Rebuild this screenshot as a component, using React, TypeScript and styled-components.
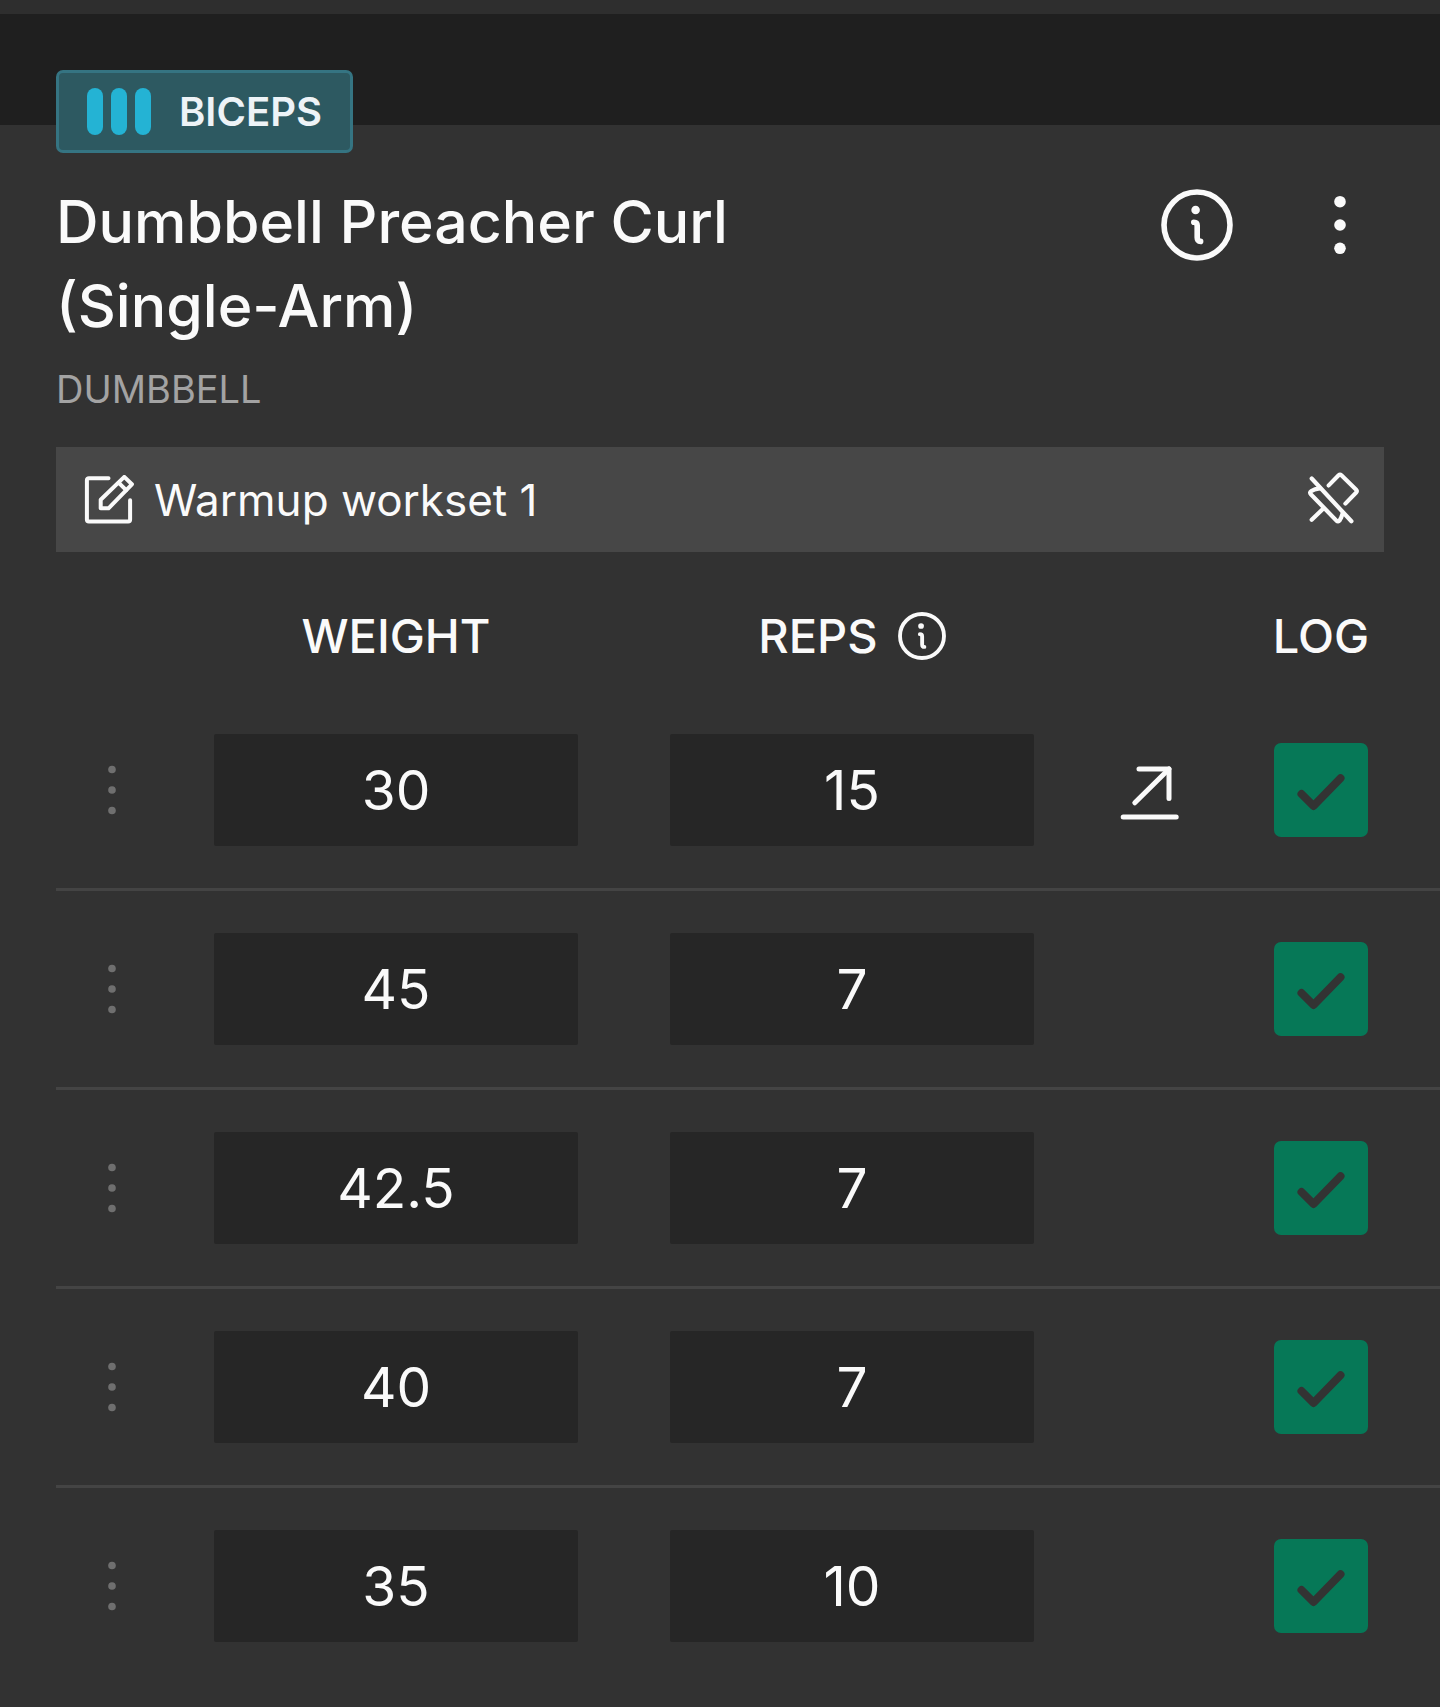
import React, { useState } from "react";
import styled, { createGlobalStyle } from "styled-components";

const GlobalStyle = createGlobalStyle`
  *, *::before, *::after { box-sizing: border-box; }
  body {
    margin: 0;
    background: #323232;
    color: #fafafa;
    font-family: Inter, "Open Sans", sans-serif;
  }
  button, input { font: inherit; color: inherit; }
`;

const PreviousCard = styled.div`
  height: 14px;
  background: #2e2e2e;
`;

const CardGap = styled.div`
  height: 111px;
  background: #1f1f1f;
`;

const Card = styled.section`
  background: #323232;
  padding: 0 0 23px 56px;
`;

const Badge = styled.div`
  position: relative;
  display: inline-flex;
  align-items: center;
  gap: 28px;
  height: 83px;
  margin-top: -55px;
  padding: 0 28px;
  border: 3px solid #357482;
  border-radius: 7px;
  background: #2d5961;
  color: #edf3f7;
  font-size: 40px;
  font-weight: 600;
  vertical-align: top;
`;

const Bars = styled.span`
  display: flex;
  gap: 8px;
`;

const Bar = styled.span`
  width: 16px;
  height: 47px;
  border-radius: 8px;
  background: #24b3d4;
`;

const Header = styled.header`
  display: flex;
  align-items: flex-start;
  gap: 63px;
  margin: 27px 56px 0 0;
`;

const Title = styled.h1`
  flex: 1;
  margin: 0;
  padding-right: 200px;
  font-size: 59px;
  line-height: 84px;
  font-weight: 500;
`;

const IconButton = styled.button<{ $width?: number }>`
  display: flex;
  flex: none;
  align-items: center;
  justify-content: center;
  width: ${(p) => (p.$width ? `${p.$width}px` : "auto")};
  margin: 0;
  padding: 0;
  border: 0;
  background: none;
  cursor: pointer;
`;

const HeaderButton = styled(IconButton)`
  margin-top: 9px;
`;

const Equipment = styled.p`
  margin: 10px 0 26px;
  font-size: 38px;
  line-height: 63px;
  color: #a3a3a3;
`;

const Note = styled.div`
  display: flex;
  align-items: center;
  height: 105px;
  margin-right: 56px;
  padding: 0 23px 0 28px;
  background: #474747;
`;

const NoteInput = styled.input`
  flex: 1;
  min-width: 0;
  margin: 0 20px;
  padding: 0;
  border: 0;
  outline: 0;
  background: none;
  font-size: 44px;
`;

const SetTable = styled.table`
  width: 100%;
  table-layout: fixed;
  border-spacing: 0;
`;

const Col = styled.col<{ $width?: number }>`
  width: ${(p) => (p.$width ? `${p.$width}px` : "auto")};
`;

const HeadCell = styled.th`
  height: 140px;
  padding: 27px 0 0;
  font-size: 47px;
  line-height: 72px;
  font-weight: 500;

  &:last-child { padding-right: 18px; }
`;

const HeadLabel = styled.span`
  display: flex;
  align-items: center;
  justify-content: center;
  gap: 20px;
`;

const SetRow = styled.tr`
  &:not(:last-child) > td { border-bottom: 3px solid #444444; }
`;

const Cell = styled.td`
  padding: 42px 0;

  &:last-child { padding-right: 18px; }
`;

const CellContent = styled.div`
  display: flex;
  align-items: center;
  justify-content: center;
  height: 112px;
`;

const ValueInput = styled.input`
  width: calc(100% - 92px);
  height: 112px;
  padding: 0;
  border: 0;
  border-radius: 2px;
  background: #262626;
  font-size: 55px;
  text-align: center;
`;

const CheckLabel = styled.label`
  display: grid;
  width: 94px;
  height: 94px;
  cursor: pointer;

  > * { grid-area: 1 / 1; }
  > svg { pointer-events: none; }
`;

const Checkbox = styled.input`
  appearance: none;
  width: 94px;
  height: 94px;
  margin: 0;
  border-radius: 7px;
  background: #555555;

  &:checked { background: #067857; }
`;

const InfoIcon = ({ size, stroke }: { size: number; stroke: number }) => (
  <svg width={size} height={size} viewBox="0 0 72 72" fill="none" stroke="currentColor" strokeLinecap="round" strokeLinejoin="round">
    <circle cx="36" cy="36" r="33" strokeWidth={stroke} />
    <circle cx="34.6" cy="21" r="4.3" fill="currentColor" stroke="none" />
    <path d="M32.8 33.2c2.2 0 3.4 1.2 3.4 3.4v12c0 2.4 1.2 3.8 3.4 3.8" strokeWidth={stroke} />
  </svg>
);

const DotsIcon = ({ size, gap, radius, color }: { size: number; gap: number; radius: number; color: string }) => (
  <svg width={size} height={size} viewBox={`0 0 ${size} ${size}`} fill={color}>
    {[-gap, 0, gap].map((dy) => (
      <circle key={dy} cx={size / 2} cy={size / 2 + dy} r={radius} />
    ))}
  </svg>
);

const EditIcon = () => (
  <svg width="50" height="50" viewBox="0 0 50 50" fill="none" stroke="currentColor" strokeWidth="4" strokeLinecap="round" strokeLinejoin="round">
    <path d="M24.5 3.2H4.9a2 2 0 0 0-2 2v39.3a2 2 0 0 0 2 2h39.2a2 2 0 0 0 2-2V25.2" />
    <path d="M16.7 33.3v-8.5L40.3 1.9l7.6 7.4-23.4 24z" />
    <path d="M34.8 7.8l7.4 7.4" />
  </svg>
);

const UnpinIcon = () => (
  <svg width="56" height="56" viewBox="0 0 56 56" fill="none" stroke="currentColor" strokeWidth="4.2" strokeLinecap="round" strokeLinejoin="round">
    <path d="M6.7 6.5l39.7 42.8" />
    <path d="M23.7 13.4L33.6 3.3q1.4-1.3 2.8 0l14.8 14.4q1.4 1.4 0 2.8L40.4 31.6" />
    <path d="M14.6 16.4l-4.8 1-3.6 1.8q-2 1.4-.4 3l25.6 26.4q1.8 1.6 3.2-.2l1.6-3 1.4-3.8" />
    <path d="M17.9 37L6.7 47.8" />
  </svg>
);

const ArrowIcon = () => (
  <svg width="60" height="60" viewBox="0 0 60 60" fill="none" stroke="currentColor" strokeWidth="5" strokeLinecap="round" strokeLinejoin="round">
    <path d="M19 9h30v29.5" />
    <path d="M49 9L14.8 42.8" />
    <path d="M3.2 57h53" />
  </svg>
);

const CheckIcon = () => (
  <svg width="94" height="94" viewBox="0 0 94 94" fill="none" stroke="#333333" strokeWidth="8" strokeLinecap="round" strokeLinejoin="round">
    <path d="M27.5 51L39.5 63 66.5 35.2" />
  </svg>
);

interface WorkoutSet {
  weight: string;
  reps: string;
  logged: boolean;
  increased?: boolean;
}

const initialSets: WorkoutSet[] = [
  { weight: "30", reps: "15", logged: true, increased: true },
  { weight: "45", reps: "7", logged: true },
  { weight: "42.5", reps: "7", logged: true },
  { weight: "40", reps: "7", logged: true },
  { weight: "35", reps: "10", logged: true },
];

export default function App() {
  const [sets, setSets] = useState(initialSets);
  const [note, setNote] = useState("Warmup workset 1");

  const update = (index: number, change: Partial<WorkoutSet>) =>
    setSets((all) => all.map((s, i) => (i === index ? { ...s, ...change } : s)));

  return (
    <main>
      <GlobalStyle />
      <PreviousCard />
      <CardGap />
      <Card>
        <Badge>
          <Bars>
            <Bar />
            <Bar />
            <Bar />
          </Bars>
          BICEPS
        </Badge>
        <Header>
          <Title>Dumbbell Preacher Curl (Single-Arm)</Title>
          <HeaderButton $width={72} aria-label="Exercise info">
            <InfoIcon size={72} stroke={5.6} />
          </HeaderButton>
          <HeaderButton $width={88} aria-label="Exercise menu">
            <DotsIcon size={72} gap={23.3} radius={5.8} color="#fafafa" />
          </HeaderButton>
        </Header>
        <Equipment>DUMBBELL</Equipment>
        <Note>
          <IconButton aria-label="Edit note">
            <EditIcon />
          </IconButton>
          <NoteInput aria-label="Note" value={note} onChange={(e) => setNote(e.target.value)} />
          <IconButton aria-label="Unpin note">
            <UnpinIcon />
          </IconButton>
        </Note>
        <SetTable>
          <colgroup>
            <Col $width={112} />
            <Col />
            <Col />
            <Col $width={140} />
            <Col $width={220} />
          </colgroup>
          <thead>
            <tr>
              <HeadCell />
              <HeadCell scope="col">WEIGHT</HeadCell>
              <HeadCell scope="col">
                <HeadLabel>
                  REPS
                  <IconButton aria-label="Reps info">
                    <InfoIcon size={48} stroke={5.8} />
                  </IconButton>
                </HeadLabel>
              </HeadCell>
              <HeadCell />
              <HeadCell scope="col">LOG</HeadCell>
            </tr>
          </thead>
          <tbody>
            {sets.map((set, i) => (
              <SetRow key={i}>
                <Cell>
                  <CellContent>
                    <IconButton aria-label={`Set ${i + 1} menu`}>
                      <DotsIcon size={56} gap={20.5} radius={3.8} color="#6f6f6f" />
                    </IconButton>
                  </CellContent>
                </Cell>
                <Cell>
                  <CellContent>
                    <ValueInput
                      inputMode="decimal"
                      aria-label={`Set ${i + 1} weight`}
                      value={set.weight}
                      onChange={(e) => update(i, { weight: e.target.value })}
                    />
                  </CellContent>
                </Cell>
                <Cell>
                  <CellContent>
                    <ValueInput
                      inputMode="numeric"
                      aria-label={`Set ${i + 1} reps`}
                      value={set.reps}
                      onChange={(e) => update(i, { reps: e.target.value })}
                    />
                  </CellContent>
                </Cell>
                <Cell>
                  <CellContent>{set.increased && <ArrowIcon />}</CellContent>
                </Cell>
                <Cell>
                  <CellContent>
                    <CheckLabel>
                      <Checkbox
                        type="checkbox"
                        aria-label={`Log set ${i + 1}`}
                        checked={set.logged}
                        onChange={(e) => update(i, { logged: e.target.checked })}
                      />
                      <CheckIcon />
                    </CheckLabel>
                  </CellContent>
                </Cell>
              </SetRow>
            ))}
          </tbody>
        </SetTable>
      </Card>
    </main>
  );
}
